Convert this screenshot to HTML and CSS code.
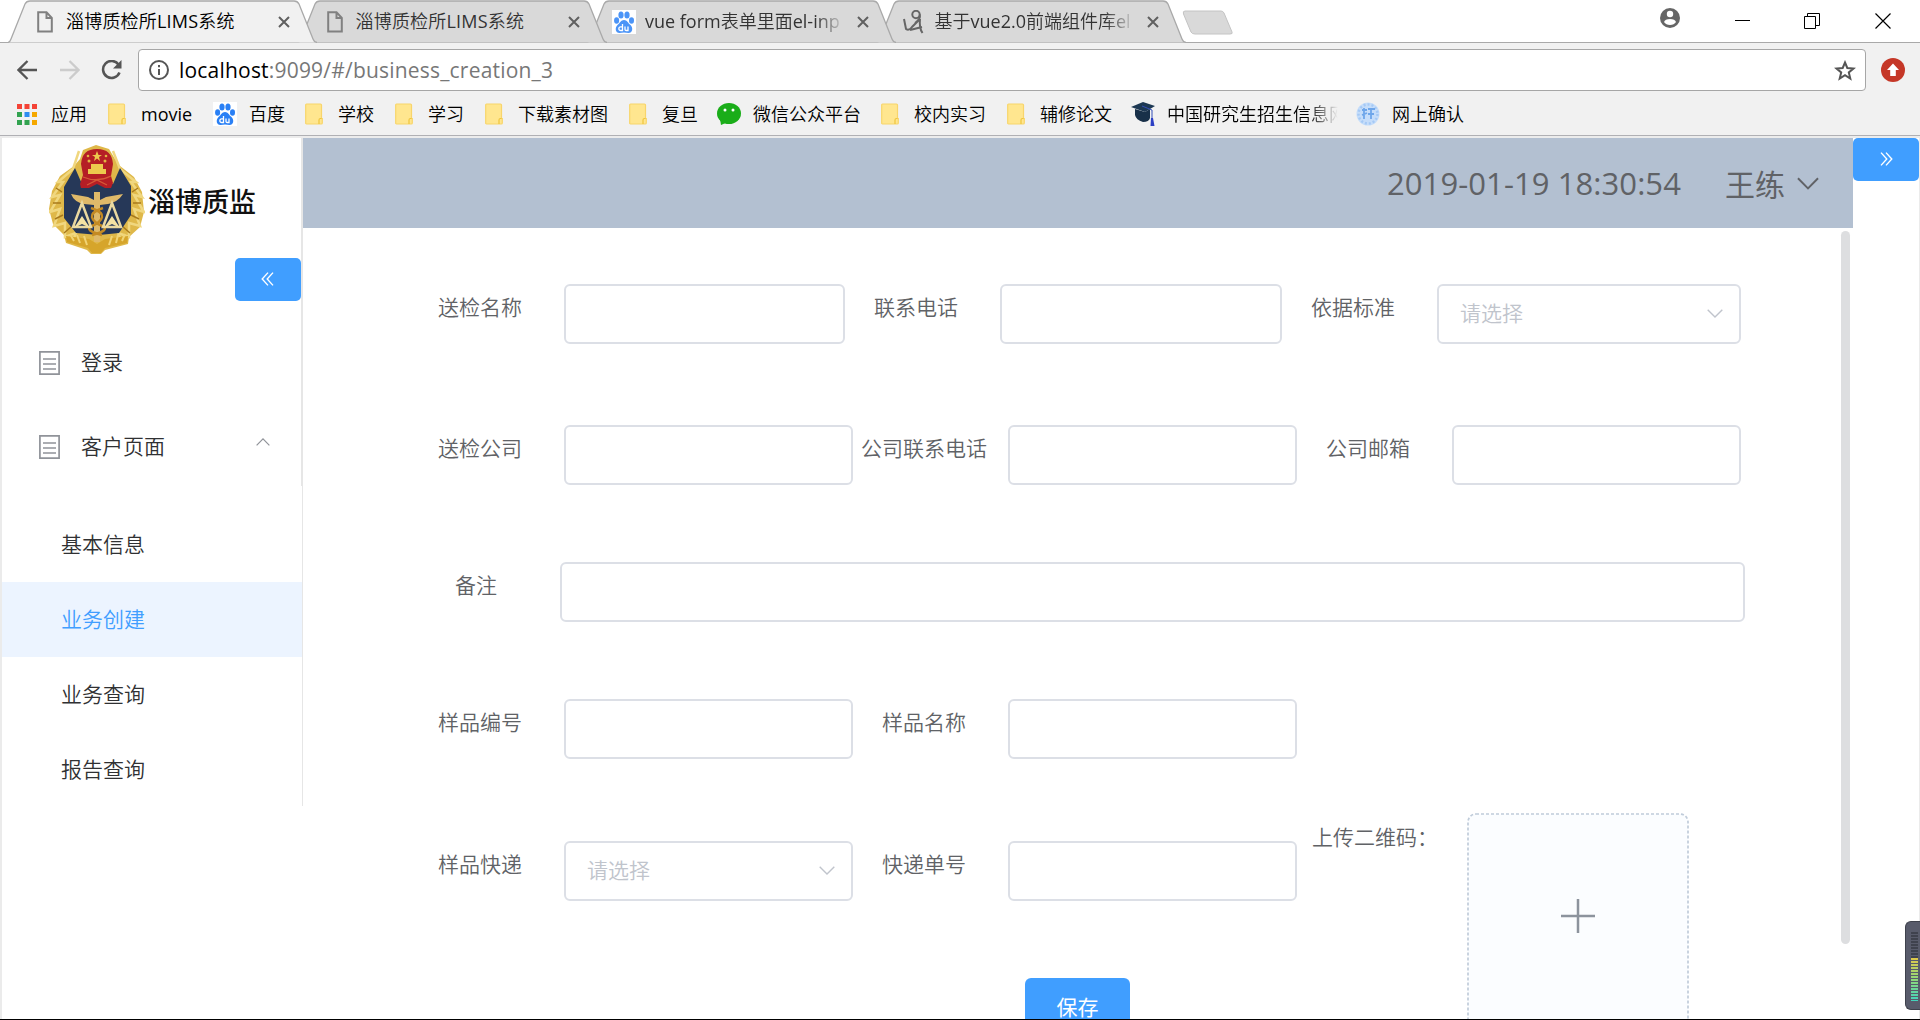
FILE: index.html
```html
<!DOCTYPE html>
<html lang="zh-CN">
<head>
<meta charset="utf-8">
<title>淄博质检所LIMS系统</title>
<link rel="stylesheet" href="styles.css">
</head>
<body>
<svg class="defs" width="0" height="0">
  <symbol id="tab-shape" viewBox="0 0 309 43"><path d="M0 42.5 Q2 42 3 39 L17 4 Q18.500 1 22 1 H286 Q289.500 1 291 4 L305 39 Q306 42 309 42.500"/></symbol>
  <symbol id="page" viewBox="0 0 16 22"><path d="M1.200 1.200H9.500L14.800 7V20.500H1.200ZM9.500 1.200V7H14.800" fill="none" stroke="currentColor" stroke-width="2"/></symbol>
  <symbol id="cross" viewBox="0 0 12 12"><path d="M1 1L11 11M11 1L1 11" fill="none" stroke="currentColor" stroke-width="2"/></symbol>
  <symbol id="paw" viewBox="0 0 24 24"><rect width="24" height="24" fill="#fff"/><ellipse cx="4.600" cy="10.500" rx="2.500" ry="3.300"/><ellipse cx="9" cy="5" rx="2.600" ry="3.500"/><ellipse cx="15" cy="5" rx="2.600" ry="3.500"/><ellipse cx="19.500" cy="10.500" rx="2.500" ry="3.300"/><path d="M12 10C15 10 16 13 18.500 15C21.500 18 20.500 23 16.500 23Q12 22 7.500 23C3.500 23 2.500 18 5.500 15C8 13 9 10 12 10Z"/><path d="M10.500 14V20.500H8.700A1.600 1.600 0 0 1 8.700 16.800H10.500M13 16.500V19.500Q13 20.500 14.200 20.500H16V16.500" fill="none" stroke="#fff" stroke-width="1.300"/></symbol>
  <symbol id="folder" viewBox="0 0 18 22"><path d="M1.500 1H15.500Q16.500 1 16.500 2V15.500H17.300V20Q17.300 21 16.300 21H1.500Q.7 21 .7 20V2Q.7 1 1.500 1Z" fill="#ffe68f" stroke="#f8d56b" stroke-width="1.200"/><path d="M14 21V17Q14 15.500 15.500 15.500H16.500" fill="none" stroke="#efc53e" stroke-width="1.200"/></symbol>
  <symbol id="doc" viewBox="0 0 21 24"><path d="M.9 .9H20.100V23.100H.9ZM4 8H17M4 13H17M4 18H17" fill="none" stroke="#909399" stroke-width="1.700"/></symbol>
  <symbol id="down" viewBox="0 0 16 9"><path d="M.7 .7L8 8L15.300 .7" fill="none" stroke="currentColor" stroke-width="1.400"/></symbol>
  <symbol id="dbl" viewBox="0 0 14 14"><path d="M7 .6L1.200 7L7 13.400M12 .6L6.200 7L12 13.400" fill="none" stroke="#fff" stroke-width="1.400"/></symbol>
</svg>

<header class="tabs">
  <div class="tab active"><svg class="shape"><use href="#tab-shape"/></svg><svg class="page"><use href="#page"/></svg><span class="title">淄博质检所<b>LIMS</b>系统</span><svg class="x"><use href="#cross"/></svg></div>
  <div class="tab"><svg class="shape"><use href="#tab-shape"/></svg><svg class="page"><use href="#page"/></svg><span class="title">淄博质检所<b>LIMS</b>系统</span><svg class="x"><use href="#cross"/></svg></div>
  <div class="tab wide"><svg class="shape"><use href="#tab-shape"/></svg><svg class="fav paw"><use href="#paw"/></svg><span class="title fade"><b>vue form</b>表单里面<b>el-inp</b></span><svg class="x"><use href="#cross"/></svg></div>
  <div class="tab wide"><svg class="shape"><use href="#tab-shape"/></svg><svg class="fav" viewBox="0 0 24 24"><g fill="none" stroke="#666" stroke-width="2"><circle cx="14" cy="4.500" r="3.700"/><path d="M2 9L4 19Q7 21 10 17L18 9M17.700 4.500Q19 9 13 13M18 9Q17 18 20.500 23M8 20L20 17"/></g></svg><span class="title fade">基于<b>vue2.0</b>前端组件库<b>el</b></span><svg class="x"><use href="#cross"/></svg></div>
  <svg class="newtab" viewBox="0 0 52 26"><path d="M3 1H39Q41 1 42 3L50 22Q51 24 48 24H13Q10 24 9 22L1.500 4Q.5 1 3 1Z" fill="#d9d9d9" stroke="#c4c4c4"/></svg>
  <div class="window-controls">
    <svg width="20" height="20" viewBox="0 0 20 20"><circle cx="10" cy="10" r="10" fill="#666"/><circle cx="10" cy="6" r="3.200" fill="#fff"/><path d="M4 14Q5 11 10 11T16 14Q14 17 10 17T4 14Z" fill="#fff"/></svg>
    <svg class="c-min" width="15" height="15"><path d="M0 7.500H15" stroke="#000"/></svg>
    <svg class="c-max" width="16" height="16"><path d="M.5 3.500H11.500V15.500H.5ZM3.500 3V.5H15.500V12.500H12" fill="none" stroke="#000"/></svg>
    <svg class="c-close" width="16" height="16"><path d="M.5 .5L15.500 15.500M15.500 .5L.5 15.500" stroke="#000" stroke-width="1.200"/></svg>
  </div>
</header>

<div class="toolbar">
  <svg class="nav" viewBox="0 0 21 20"><path d="M20 10H2M10.500 1L1.500 10L10.500 19" fill="none" stroke="#555" stroke-width="2.300"/></svg>
  <svg class="nav" viewBox="0 0 21 20"><path d="M1 10H19M10.500 1L19.500 10L10.500 19" fill="none" stroke="#ccc" stroke-width="2.300"/></svg>
  <svg class="nav" viewBox="0 0 21 20"><path d="M17.500 4.500A8.500 8.500 0 1 0 18.500 12.500" fill="none" stroke="#555" stroke-width="2.500"/><path d="M20.500 0V8.500H12Z" fill="#555"/></svg>
  <div class="url">
    <svg class="info" viewBox="0 0 20 20"><circle cx="10" cy="10" r="9" fill="none" stroke="#555" stroke-width="2"/><path d="M10 9V15M10 5V7.200" stroke="#555" stroke-width="2"/></svg>
    <span class="addr"><b>localhost</b>:9099/#/business_creation_3</span>
    <svg class="star" viewBox="0 0 22 21"><path d="M11 2.500L13.300 8L19.500 8.500L14.800 12.400L16.300 18.500L11 15.200L5.700 18.500L7.200 12.400L2.500 8.500L8.700 8Z" fill="none" stroke="#555" stroke-width="2"/></svg>
  </div>
  <svg class="ext" viewBox="0 0 24 24"><circle cx="12" cy="12" r="12" fill="#c53727"/><path d="M12 5.500L18 12H14.800V18H9.200V12H6Z" fill="#fff"/></svg>
</div>

<nav class="bookmarks">
  <a class="apps"><svg viewBox="0 0 20 21"><path d="M0 0h5v5H0zM7.500 0h5v5h-5zM15 0h5v5h-5z" fill="#f44336"/><path d="M0 8h5v5H0zM0 16h5v5H0zM7.500 16h5v5h-5z" fill="#32a350"/><path d="M7.500 8h5v5h-5z" fill="#2d8cf0"/><path d="M15 8h5v5h-5zM15 16h5v5h-5z" fill="#f5a800"/></svg>应用</a>
  <a class="fold"><svg><use href="#folder"/></svg><span class="latin">movie</span></a>
  <a class="icon"><svg class="paw deep"><use href="#paw"/></svg>百度</a>
  <a class="fold"><svg><use href="#folder"/></svg>学校</a>
  <a class="fold"><svg><use href="#folder"/></svg>学习</a>
  <a class="fold"><svg><use href="#folder"/></svg>下载素材图</a>
  <a class="fold"><svg><use href="#folder"/></svg>复旦</a>
  <a class="icon"><svg viewBox="0 0 24 24"><ellipse cx="12" cy="11.500" rx="12" ry="10.500" fill="#1aad19"/><path d="M3 17L4 23L11 20Z" fill="#1aad19"/><circle cx="8" cy="8" r="1.500" fill="#fff"/><circle cx="16" cy="8" r="1.500" fill="#fff"/></svg>微信公众平台</a>
  <a class="fold"><svg><use href="#folder"/></svg>校内实习</a>
  <a class="fold"><svg><use href="#folder"/></svg>辅修论文</a>
  <a class="icon"><svg viewBox="0 0 24 24"><path d="M0 5L12 0L24 4L14 10Z" fill="#1d3853"/><path d="M4 7L14 10L19 7V16Q18 20 12 20Q5 18 4 13Z" fill="#183049"/><path d="M11 4L21 8V16" fill="none" stroke="#334fb8" stroke-width="1"/><path d="M20 16H22L23.500 24H19.500Z" fill="#2c3fc4"/></svg><span class="fade school">中国研究生招生信息网</span></a>
  <a class="icon"><svg viewBox="0 0 24 24"><circle cx="12" cy="12" r="11.500" fill="#c5ddfa"/><circle cx="12" cy="12" r="9.500" fill="none" stroke="#a5c9f5" stroke-width="2.500" stroke-dasharray="2 2"/><path d="M6 8H11M8 6V17M12 7H19M12 12H18M15 7V17M6 13L11 11" stroke="#6ea6ea" stroke-width="1.800"/></svg>网上确认</a>
</nav>

<div class="page-body">
  <aside class="sidebar">
    <div class="side-top">
      <div class="brand">
        <svg class="emblem" viewBox="0 0 96 110">
          <path d="M31 14L34 5L47 0L60 4L66 14L71 21L85 32L93 47L95 67L91 82L80 92L79 99L56 105L52 109L42 109L38 105L17 98L15 90L4 79L0 64L3 46L11 31L25 21Z" fill="#dfb849"/>
          <path d="M30 6L24 24L9 37L14 37L3 52L11 50L1 67L11 64L5 81L16 78L16 92L27 88L23 98M64 6L71 24L87 37L82 37L93 52L85 50L95 67L85 64L91 81L80 78L80 92L69 88L73 98" fill="none" stroke="#f0d77f" stroke-width="2.500"/>
          <path d="M7 43L13 47M4 58L12 58M6 74L14 70M15 88L23 81M89 43L83 47M92 58L84 58M90 74L82 70M81 88L73 81" stroke="#a87a1c" stroke-width="1.500"/>
          <path d="M26 23L33 39L64 39L71 23L82 41L82 70L70 88L50 90L27 88L15 73L15 42Z" fill="#263858"/>
          <path d="M32 19Q33 4 48 4T64 19L62 31L64 38L62 43H56L48 39L40 43H32L31 39L34 30Z" fill="#b51e25"/>
          <path d="M34 32Q48 38 62 31M38 40L48 35L58 40" fill="none" stroke="#d65b38" stroke-width="1.300"/>
          <path d="M48 6L49.500 10H53L50 12L51 16L48 13.500L45 16L46 12L43 10H46.500ZM39 29H57V24H54V19H42V24H39Z" fill="#edc94d"/>
          <g fill="#e1b541"><circle cx="40" cy="16" r="1.500"/><circle cx="56" cy="16" r="1.500"/><circle cx="39" cy="11" r="1.300"/><circle cx="57" cy="11" r="1.300"/></g>
          <path d="M22 49L39 52L45 55V47H51V55L57 52L74 49Q69 57 59 59L51 60V97H45V60L35 59Q25 57 22 49Z" fill="#dfb969"/>
          <path d="M42 63Q54 67 53 72T43 81T53 90M54 63Q42 67 43 72T53 81T43 90" fill="none" stroke="#c48a23" stroke-width="2.500"/>
          <path d="M33 58L24 82H42ZM63 58L54 82H72Z" fill="#263858" stroke="#ead9a0" stroke-width="2.500"/>
          <path d="M25 83L33 71L41 83L33 79ZM55 83L63 71L71 83L63 79Z" fill="#f4e3a4"/>
          <path d="M17 91L40 94L48 99L56 94L79 91L78 98L56 103L52 108H43L39 103L18 97Z" fill="#d6a52b"/>
          <path d="M21 89L25 96M28 90L31 98M35 91L38 100M60 100L63 91M67 98L69 90M73 96L76 89" stroke="#f1d475" stroke-width="2"/>
        </svg>
        <span class="brand-name">淄博质监</span>
      </div>
      <button class="toggle left"><svg><use href="#dbl"/></svg></button>
      <div class="item"><svg class="doc"><use href="#doc"/></svg><span>登录</span></div>
      <div class="item second"><svg class="doc"><use href="#doc"/></svg><span>客户页面</span><svg class="up"><use href="#down"/></svg></div>
    </div>
    <div class="submenu">
      <div class="sub">基本信息</div>
      <div class="sub on">业务创建</div>
      <div class="sub">业务查询</div>
      <div class="sub">报告查询</div>
    </div>
  </aside>

  <main class="main">
    <div class="banner"><span class="time">2019-01-19 18:30:54</span><span class="user">王练</span><svg class="caret"><use href="#down"/></svg></div>
    <div class="content">
      <form class="form">
        <div class="row r1"><label>送检名称</label><div class="input w281"></div><label>联系电话</label><div class="input w282"></div><label>依据标准</label><div class="input w304 select">请选择<svg><use href="#down"/></svg></div></div>
        <div class="row r2"><label>送检公司</label><div class="input"></div><label class="long">公司联系电话</label><div class="input"></div><label>公司邮箱</label><div class="input"></div></div>
        <div class="row r3"><label class="short">备注</label><div class="input full"></div></div>
        <div class="row r4"><label>样品编号</label><div class="input"></div><label>样品名称</label><div class="input"></div></div>
        <div class="row r5"><label>样品快递</label><div class="input select">请选择<svg><use href="#down"/></svg></div><label>快递单号</label><div class="input"></div>
          <span class="up-label">上传二维码：</span>
          <svg class="upload" viewBox="0 0 222 222"><rect x="1" y="1" width="220" height="220" rx="8" fill="#fbfdff" stroke="#c0ccda" stroke-width="1.700" stroke-dasharray="3 2"/><path d="M94 103H128M111 86V120" stroke="#8c939d" stroke-width="2.500"/></svg>
        </div>
        <div class="actions"><button class="save">保存</button></div>
      </form>
      <div class="scrollbar"></div>
    </div>
  </main>

  <div class="right"><button class="toggle flip"><svg><use href="#dbl"/></svg></button></div>
</div>
<div class="meter"><i class="off"></i><i class="lit"></i></div>
<div class="taskbar-edge"></div>
</body>
</html>
```
FILE: styles.css
```css
* { box-sizing: border-box; }
html, body { margin: 0; height: 1020px; overflow: hidden; }
body { background: #fff; color: #303133; font-family: "Open Sans", "Noto Sans CJK SC", sans-serif; font-weight: 350; display: flex; flex-direction: column; position: relative; }
svg { display: block; flex: none; }
b { font-weight: 400; }
.defs { position: absolute; }
button { border: 0; padding: 0; font: inherit; color: #fff; background: #409eff; }

/* tab strip */
.tabs { height: 43px; flex: none; display: flex; padding-left: 8px; border-bottom: 1px solid #a9a9a9; position: relative; }
.tab { width: 309px; margin-right: -19.500px; height: 43px; display: flex; align-items: center; position: relative; z-index: 1; padding: 1px 27px 0 29px; color: #333; font-size: 18px; line-height: 24px; flex: none; }
.tab.active { z-index: 5; color: #000; }
.tab:nth-child(2) { z-index: 4; }
.tab:nth-child(3) { z-index: 3; }
.tab.wide { padding-left: 25px; }
.shape { position: absolute; left: 0; top: 0; width: 309px; height: 43px; fill: #d9d9d9; stroke: #a9a9a9; stroke-width: 1.300; }
.active .shape { fill: #f1f1f1; }
.tab > :not(.shape) { position: relative; }
.page { width: 16px; height: 22px; color: #808080; margin-right: 13px; }
.tab .title { flex: 1; white-space: nowrap; overflow: hidden; letter-spacing: .2px; padding-bottom: 2px; }
.tab.wide .title { letter-spacing: 0; }
.fav { width: 24px; height: 24px; margin-right: 9px; }
.paw { fill: #4b94f7; }
.deep { fill: #2a80f5; }
.x { width: 12px; height: 12px; color: #606060; margin-left: 20px; }
.fade { -webkit-mask-image: linear-gradient(90deg, #000 calc(100% - 30px), transparent); mask-image: linear-gradient(90deg, #000 calc(100% - 30px), transparent); }
.wide .x { margin-left: 12px; }
.newtab { width: 52px; height: 26px; margin: 10px 0 0 16px; }
.window-controls { margin-left: auto; display: flex; padding: 8px 29px 0 0; }
.c-min { margin: 5px 0 0 55px; }
.c-max { margin: 5px 0 0 54px; }
.c-close { margin: 5px 0 0 55px; }

/* address row */
.toolbar { height: 49px; flex: none; background: #f1f1f1; padding: 6px 15px 0 17px; display: flex; }
.nav { width: 21px; height: 20px; margin: 11px 21px 0 0; }
.nav:nth-child(3) { margin-right: 16px; }
.url { flex: 1; height: 42px; margin-right: 15px; border: 1px solid #a6a6a6; border-radius: 4px; background: #fff; display: flex; align-items: center; padding: 0 9px 0 10px; }
.info { width: 20px; height: 20px; margin-right: 10px; }
.addr { flex: 1; font-size: 21px; letter-spacing: .2px; color: #777; font-weight: 400; line-height: 30px; }
.addr b { color: #000; }
.star { width: 22px; height: 21px; }
.ext { width: 24px; height: 24px; margin-top: 9px; }

/* bookmarks, with the dividing line and page edge painted at the bottom */
.bookmarks { height: 46px; flex: none; background: linear-gradient(#f1f1f1 43px, #b0b0b4 43px, #b0b0b4 44px, #ececec 44px); display: flex; padding: 0 0 2px 17px; gap: 21px; color: #000; font-size: 18px; }
.bookmarks a { display: flex; align-items: center; white-space: nowrap; flex: none; line-height: 26px; }
.bookmarks .icon { margin-right: -1px; margin-left: -2px; }
.apps svg { width: 20px; height: 21px; margin-right: 14px; }
.fold svg { width: 18px; height: 22px; margin-right: 15px; }
.icon svg { width: 24px; height: 24px; margin-right: 12px; }
.latin { width: 53px; font-weight: 400; }
.school { width: 171px; overflow: hidden; }

/* page */
.page-body { flex: 1; min-height: 0; display: flex; border-left: 2px solid #ebebeb; overflow: hidden; }
.sidebar { width: 301px; flex: none; font-size: 21px; }
.side-top { height: 348px; border-right: 2px solid #e6e6e6; display: flex; flex-direction: column; }
.brand { height: 120px; flex: none; display: flex; padding: 7px 0 0 47px; }
.emblem { width: 96px; height: 110px; }
.brand-name { font-size: 27px; font-weight: 500; color: #111; line-height: 40px; margin: 37px 0 0 3px; }
.toggle { width: 66px; height: 43px; border-radius: 5px; display: flex; align-items: center; justify-content: center; flex: none; }
.toggle svg { width: 14px; height: 14px; margin-bottom: 1px; }
.toggle.left { align-self: flex-end; }
.flip svg { transform: scaleX(-1); }
.item { height: 84px; display: flex; align-items: center; padding: 0 31px 0 37px; margin-top: 20px; flex: none; }
.item span { padding-bottom: 4px; }
.item.second { margin-top: 0; }
.doc { width: 21px; height: 24px; margin-right: 21px; }
.up { width: 14px; height: 8px; color: #909399; transform: scaleY(-1); margin: -11px 0 0 auto; }
.submenu { height: 320px; padding-top: 21px; border-right: 1px solid #e6e6e6; }
.sub { height: 75px; line-height: 75px; padding-left: 59px; }
.sub.on { color: #409eff; background: #ecf4ff; }
.main { width: 1550px; flex: none; display: flex; flex-direction: column; }
.banner { height: 90px; flex: none; background: #b3c0d1; display: flex; align-items: center; justify-content: flex-end; padding: 0 34px 0 0; color: #606266; font-size: 30px; font-weight: 400; }
.time { width: 295px; margin-right: 43px; white-space: nowrap; font-size: 31px; letter-spacing: .08px; }
.user { margin-right: 12px; padding-bottom: 1px; }
.caret { width: 22px; height: 13px; }
.content { flex: 1; min-height: 0; display: flex; overflow: hidden; }
.form { width: 1538px; flex: none; padding-top: 56px; color: #606266; font-size: 21px; }
.row { display: flex; height: 60px; padding-left: 135px; }
.r1 { margin-bottom: 81px; }
.r2, .r3 { margin-bottom: 77px; }
.r4 { margin-bottom: 82px; }
label { width: 84px; line-height: 46px; margin: 0 42px 0 29px; white-space: nowrap; flex: none; }
label:first-child { margin-left: 0; }
label.long { width: 126px; margin: 0 21px 0 8px; }
label.short { width: 42px; margin: 0 63px 0 17px; }
label.short:first-child { margin-left: 17px; }
.input { width: 289px; height: 60px; border: 2px solid #dcdfe6; border-radius: 6px; flex: none; }
.w281 { width: 281px; }
.w282 { width: 282px; }
.w304 { width: 304px; }
.input.full { width: 1185px; }
.select { color: #c0c4cc; display: flex; align-items: center; justify-content: space-between; padding: 0 16px 4px 21px; }
.select svg { width: 16px; height: 9px; margin-top: 2px; }
.up-label { width: 155px; margin: -28px 0 0 15px; line-height: 48px; white-space: nowrap; flex: none; }
.upload { width: 222px; height: 222px; margin-top: -28px; }
.actions { padding: 77px 0 0 722px; }
.save { width: 105px; height: 60px; border-radius: 6px; padding-bottom: 4px; font-weight: 400; }
.scrollbar { width: 9px; height: 713px; margin-top: 3px; border-radius: 5px; background: #dddee0; }
.right { flex: 1; border-right: 1px solid #ebebeb; }

/* desktop widget floating over the window */
.meter { position: absolute; right: 0; top: 921px; width: 15px; height: 89px; border: 1px solid #3e414c; border-right: 0; border-radius: 6px 0 0 6px; background: #585b6b; padding: 10px 2px 0 5px; }
.meter i { display: block; height: 26px; background: repeating-linear-gradient(#3f424e 0 2px, #585b6b 2px 3px); }
.meter .lit { height: 43px; background: repeating-linear-gradient(transparent 0 2px, #585b6b 2px 3px), linear-gradient(#e0c84a, #8fd87a 50%, #42d3bd); }
.taskbar-edge { position: absolute; left: 0; right: 0; bottom: 0; height: 1px; background: #000; }
```
